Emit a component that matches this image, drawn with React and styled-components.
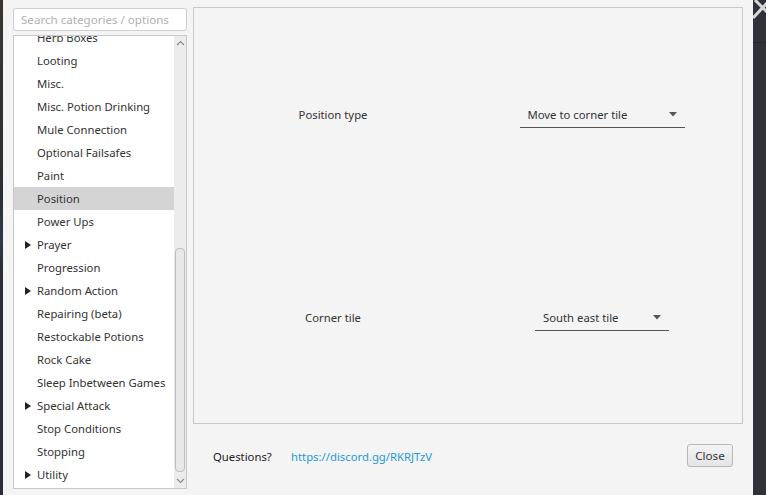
import React from 'react'
import styled, { createGlobalStyle } from 'styled-components'

const GlobalStyle = createGlobalStyle`
html, body {
  margin: 0;
  padding: 0;
  background: #f4f4f4;
  font-family: "Noto Sans", "Open Sans", sans-serif;
  font-size: 11.3px;
  color: #333;
}
* { box-sizing: border-box; }
`

const categories = [
    { name: 'Herb Boxes' },
    { name: 'Looting' },
    { name: 'Misc.' },
    { name: 'Misc. Potion Drinking' },
    { name: 'Mule Connection' },
    { name: 'Optional Failsafes' },
    { name: 'Paint' },
    { name: 'Position', selected: true },
    { name: 'Power Ups' },
    { name: 'Prayer', group: true },
    { name: 'Progression' },
    { name: 'Random Action', group: true },
    { name: 'Repairing (beta)' },
    { name: 'Restockable Potions' },
    { name: 'Rock Cake' },
    { name: 'Sleep Inbetween Games' },
    { name: 'Special Attack', group: true },
    { name: 'Stop Conditions' },
    { name: 'Stopping' },
    { name: 'Utility', group: true },
]

const Caret = () => (
    <svg width="8" height="5" viewBox="0 0 8 5">
        <path d="M0 0 L8 0 L4 4.5 Z" fill="#555" />
    </svg>
)

const Triangle = () => (
    <svg width="6" height="8" viewBox="0 0 6 8">
        <path d="M0 0 L6 4 L0 8 Z" fill="#222" />
    </svg>
)

const Chevron = ({ down }) => (
    <svg width="9" height="6" viewBox="0 0 9 6">
        <path d={down ? 'M1 1 L4.5 4.5 L8 1' : 'M1 5 L4.5 1.5 L8 5'} fill="none" stroke="#888" strokeWidth="1.1" />
    </svg>
)

export default function App() {
    return (
        <>
            <GlobalStyle />
            <Page>
                <LeftEdge />
                <Main>
                    <Sidebar>
                        <Search placeholder="Search categories / options" />
                        <ListBox>
                            <List>
                                <ListInner>
                                    {categories.map(c => (
                                        <Item key={c.name} selected={c.selected}>
                                            <Expander>{c.group && <Triangle />}</Expander>
                                            {c.name}
                                        </Item>
                                    ))}
                                </ListInner>
                            </List>
                            <ScrollBar>
                                <ScrollArrow><Chevron /></ScrollArrow>
                                <Track>
                                    <Thumb />
                                </Track>
                                <ScrollArrow><Chevron down /></ScrollArrow>
                            </ScrollBar>
                        </ListBox>
                    </Sidebar>

                    <Content>
                        <Panel>
                            <OptionLabel>Position type</OptionLabel>
                            <OptionCell>
                                <Select width={165}>
                                    <span>Move to corner tile</span>
                                    <Caret />
                                </Select>
                            </OptionCell>
                            <OptionLabel>Corner tile</OptionLabel>
                            <OptionCell>
                                <Select width={134}>
                                    <span>South east tile</span>
                                    <Caret />
                                </Select>
                            </OptionCell>
                        </Panel>
                        <Footer>
                            <Questions>Questions?</Questions>
                            <Link>https://discord.gg/RKRJTzV</Link>
                            <CloseButton>Close</CloseButton>
                        </Footer>
                    </Content>
                </Main>
                <RightEdge>
                    <svg width="13" height="22" viewBox="0 0 13 22">
                        <path d="M2 0 L14 12 M0 18 L14 3" stroke="#d8d8d8" strokeWidth="3" />
                    </svg>
                    <EdgeLine />
                </RightEdge>
            </Page>
        </>
    )
}

const Page = styled.div`
display: flex;
width: 766px;
height: 495px;
overflow: hidden;
`

const LeftEdge = styled.div`
width: 3px;
background: linear-gradient(#3a3530, #2a2d33 40%, #2d3a48 48%, #2a2d33 55%);
`

const RightEdge = styled.div`
width: 13px;
background: #2f3238;
display: flex;
flex-direction: column;
`

const EdgeLine = styled.div`
margin-top: 20px;
height: 1px;
background: #25272b;
`

const Main = styled.div`
flex: 1;
display: flex;
gap: 6px;
padding: 7px 10px 0 10px;
`

const Sidebar = styled.div`
width: 174px;
display: flex;
flex-direction: column;
gap: 4px;
padding-top: 1px;
`

const Search = styled.input`
height: 23px;
border: 1px solid #cfcfcf;
border-radius: 3px;
background: #fff;
padding: 0 7px;
font-family: inherit;
font-size: 11.6px;
color: #333;
outline: none;
&::placeholder { color: #b0b0b0; }
`

const ListBox = styled.div`
height: 454px;
display: flex;
border: 1px solid #c8c8c8;
background: #fff;
`

const List = styled.div`
flex: 1;
overflow: hidden;
`

const ListInner = styled.div`
margin-top: -10px;
`

const Item = styled.div`
height: 23px;
display: flex;
align-items: center;
padding-left: 11px;
color: #333;
white-space: nowrap;
background: ${p => (p.selected ? '#d4d4d4' : 'transparent')};
`

const Expander = styled.span`
width: 12px;
display: flex;
align-items: center;
`

const ScrollBar = styled.div`
width: 12px;
display: flex;
flex-direction: column;
background: #ececec;
`

const ScrollArrow = styled.div`
height: 14px;
display: flex;
align-items: center;
justify-content: center;
`

const Track = styled.div`
flex: 1;
display: flex;
flex-direction: column;
justify-content: flex-end;
padding: 0 1px 2px 1px;
`

const Thumb = styled.div`
height: 224px;
border: 1px solid #bcbcbc;
border-radius: 4px;
background: #e8e8e8;
`

const Content = styled.div`
flex: 1;
display: flex;
flex-direction: column;
`

const Panel = styled.div`
height: 417px;
border: 1px solid #c8c8c8;
display: grid;
grid-template-columns: 1fr 1fr;
grid-template-rows: 1fr 1fr;
padding: 5px 0 4px;
`

const OptionLabel = styled.div`
display: flex;
align-items: center;
justify-content: center;
padding-left: 4px;
color: #333;
`

const OptionCell = styled.div`
display: flex;
align-items: center;
justify-content: center;
padding-right: 6px;
`

const Select = styled.div`
width: ${p => p.width}px;
height: 27px;
display: flex;
align-items: center;
justify-content: space-between;
padding: 0 8px;
border-bottom: 1px solid #555;
color: #333;
`

const Footer = styled.div`
flex: 1;
display: flex;
align-items: center;
padding: 0 10px 6px 20px;
`

const Questions = styled.span`
color: #222;
width: 78px;
`

const Link = styled.span`
color: #1f9ad8;
flex: 1;
`

const CloseButton = styled.button`
width: 46px;
height: 23px;
margin-top: -2px;
border: 1px solid #b8b8b8;
border-radius: 3px;
background: linear-gradient(#f4f4f4, #e4e4e4);
font-family: inherit;
font-size: 11.6px;
color: #333;
padding: 0;
`
